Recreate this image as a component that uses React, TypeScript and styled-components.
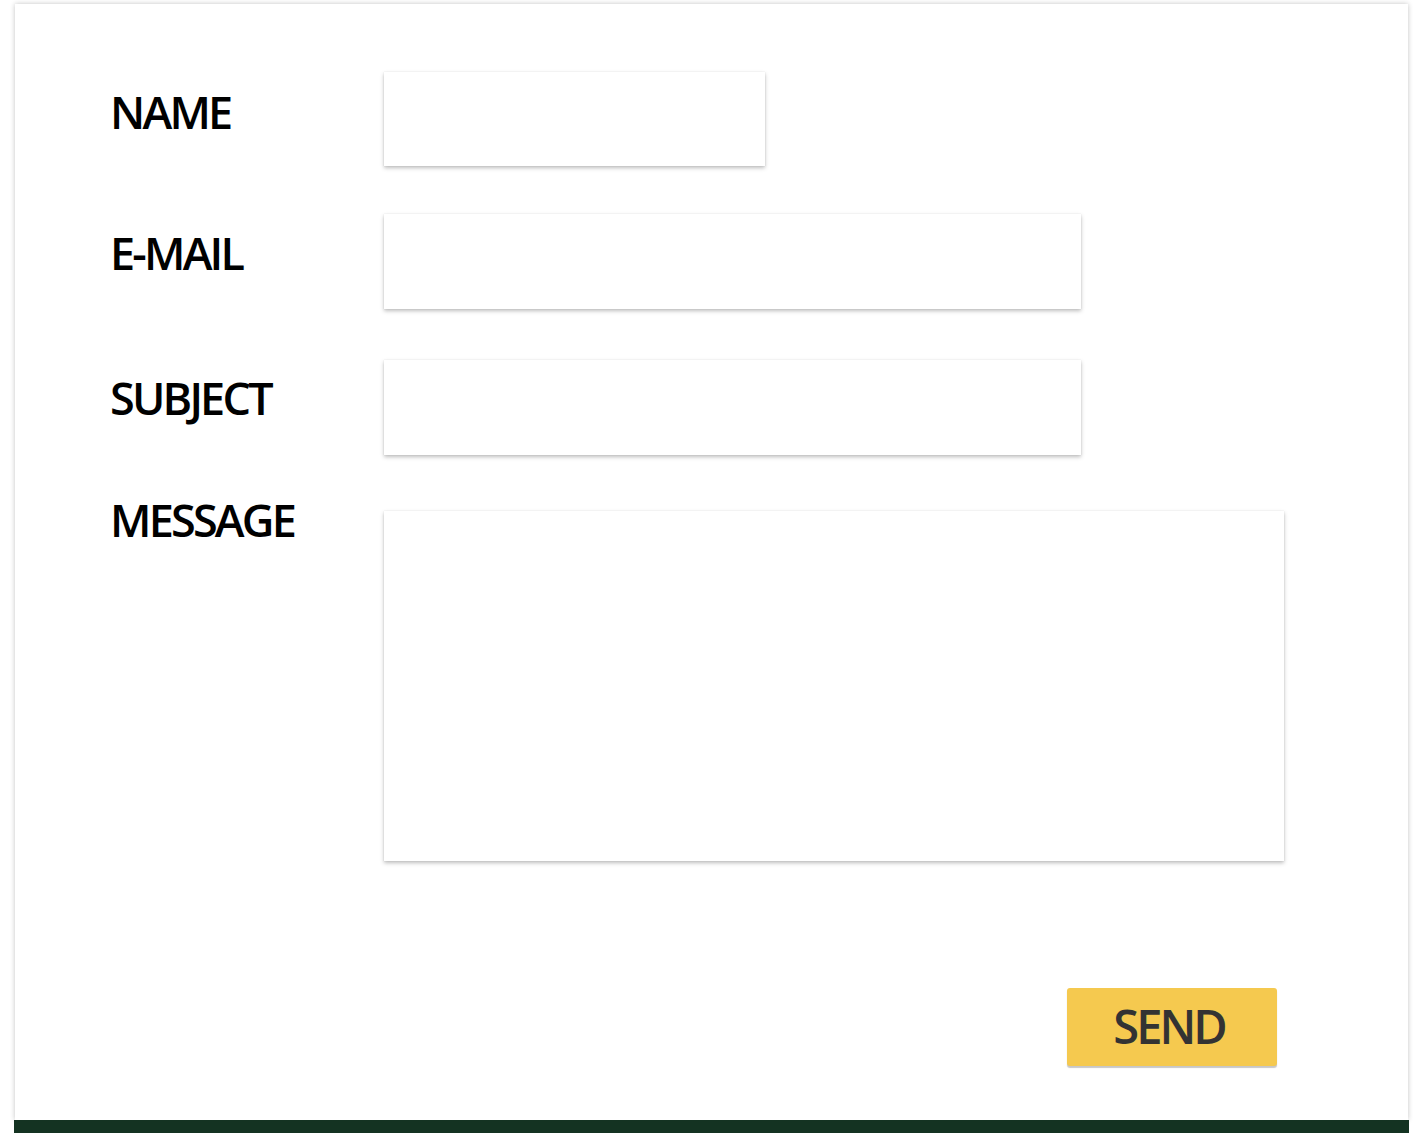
import React from "react";
import styled, { createGlobalStyle } from "styled-components";

const Global = createGlobalStyle`
  html, body { margin: 0; padding: 0; background: #ffffff; overflow: hidden; }
  * { box-sizing: border-box; }
`;

const Page = styled.div`
  padding: 4px 13px 0 15px;
  font-family: "Open Sans", "Noto Sans", sans-serif;
`;

const Card = styled.div`
  background: #ffffff;
  box-shadow: 0 0 5px rgba(0, 0, 0, 0.24);
  padding: 68px 0 54px 95px;
  display: flex;
  flex-direction: column;
`;

const Row = styled.div<{ $gap: number }>`
  display: flex;
  align-items: flex-start;
  margin-top: ${(p) => p.$gap}px;
`;

const Label = styled.label<{ $offset: number }>`
  width: 274px;
  flex: none;
  margin-top: ${(p) => p.$offset}px;
  font-size: 45px;
  line-height: 45px;
  font-weight: 600;
  letter-spacing: -2.8px;
  color: #000000;
`;

const Field = styled.input<{ $w: number; $h: number }>`
  width: ${(p) => p.$w}px;
  height: ${(p) => p.$h}px;
  border: none;
  outline: none;
  background: #ffffff;
  box-shadow: 0 2px 4px rgba(0, 0, 0, 0.26), 0 0 1px rgba(0, 0, 0, 0.12);
  font-family: inherit;
  font-size: 20px;
  padding: 0 16px;
`;

const Area = styled.textarea`
  width: 900px;
  height: 350px;
  border: none;
  outline: none;
  resize: none;
  background: #ffffff;
  box-shadow: 0 2px 4px rgba(0, 0, 0, 0.26), 0 0 1px rgba(0, 0, 0, 0.12);
  font-family: inherit;
  font-size: 20px;
  padding: 16px;
`;

const Actions = styled.div`
  display: flex;
  justify-content: flex-end;
  margin-top: 127px;
  padding-right: 131px;
`;

const SendButton = styled.button`
  width: 210px;
  height: 78px;
  border: none;
  border-radius: 3px;
  background: #f5c94f;
  box-shadow: 0 2px 1px rgba(0, 0, 0, 0.22);
  color: #333333;
  font-family: "Open Sans", "Noto Sans", sans-serif;
  font-size: 47px;
  font-weight: 600;
  letter-spacing: -3px;
  line-height: 1;
  padding: 0 6px 2px 0;
  cursor: pointer;
`;

const Footer = styled.div`
  height: 13px;
  margin: 0 -1px 0 -1px;
  background: #143322;
`;

export default function App() {
  return (
    <>
      <Global />
      <Page>
        <Card>
          <Row $gap={0}>
            <Label $offset={17}>NAME</Label>
            <Field $w={381} $h={94} />
          </Row>
          <Row $gap={48}>
            <Label $offset={16}>E-MAIL</Label>
            <Field $w={697} $h={95} />
          </Row>
          <Row $gap={51}>
            <Label $offset={15}>SUBJECT</Label>
            <Field $w={697} $h={95} />
          </Row>
          <Row $gap={56}>
            <Label $offset={-14}>MESSAGE</Label>
            <Area />
          </Row>
          <Actions>
            <SendButton>SEND</SendButton>
          </Actions>
        </Card>
        <Footer />
      </Page>
    </>
  );
}
